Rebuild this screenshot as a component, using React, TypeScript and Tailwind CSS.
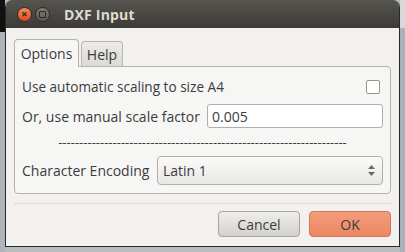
export default function App() {
  return (
    <div
      className="flex w-[405px] h-[252px] bg-[#b9bcbf] overflow-hidden"
      style={{ fontFamily: '"Open Sans", "Noto Sans", sans-serif' }}
    >
      {/* strip of the desktop behind */}
      <div className="flex flex-col w-[5px] shrink-0">
        <div className="h-[32px] bg-[#111]" />
        <div className="flex-1 bg-[#aeb4ba]" />
      </div>

      {/* dialog window */}
      <div className="flex flex-col w-[395px] h-[247px] shrink-0 rounded-t-[7px] border-x border-b border-[#2a2a28] bg-[#f2f1f0] overflow-hidden">
        {/* title bar */}
        <div className="flex items-center h-[28px] shrink-0 bg-gradient-to-b from-[#55544f] to-[#3c3b37] pl-[11px]">
          <div className="flex items-center justify-center w-[15px] h-[15px] rounded-full bg-gradient-to-b from-[#f78a5c] to-[#dd4814] border border-[#2c2b28]">
            <span className="text-[#2b2a27] text-[11px] leading-none font-bold -mt-px">×</span>
          </div>
          <div className="flex items-center justify-center w-[15px] h-[15px] ml-[3px] rounded-full bg-gradient-to-b from-[#7b7a74] to-[#5a5954] border border-[#2c2b28]">
            <div className="w-[7px] h-[7px] border border-[#2b2a27] rounded-[1px]" />
          </div>
          <span className="ml-[14px] text-[14px] font-bold text-[#dfdbd2] tracking-[0.2px]">DXF Input</span>
        </div>

        {/* body */}
        <div className="flex flex-col flex-1 px-[8px] pt-[11px] text-[14px] text-[#3c3c3c]">
          {/* tabs */}
          <div className="flex items-end h-[28px] -mb-px relative z-10">
            <div className="flex items-center justify-center w-[65px] h-[28px] rounded-t-[4px] border border-b-0 border-[#b7b2ab] bg-[#f6f6f5]">
              Options
            </div>
            <div className="flex items-center justify-center w-[42px] h-[25px] ml-[2px] mb-px rounded-t-[4px] border border-b-0 border-[#bcb7b0] bg-gradient-to-b from-[#ecebe9] to-[#dbd9d5]">
              Help
            </div>
          </div>

          {/* panel */}
          <div className="flex flex-col h-[128px] rounded-b-[4px] rounded-tr-[4px] border border-[#b7b2ab] bg-[#f6f6f5] pl-[7px] pr-[7px] pt-[8px]">
            <div className="flex items-center justify-between h-[24px]">
              <span className="text-[13.6px]">Use automatic scaling to size A4</span>
              <div className="w-[14px] h-[14px] mr-[3px] rounded-[2px] border border-[#9a948b] bg-white" />
            </div>
            <div className="flex items-center h-[24px] mt-[5px]">
              <span className="w-[185px] shrink-0 whitespace-nowrap">Or, use manual scale factor</span>
              <div className="flex items-center flex-1 h-[24px] pl-[4px] rounded-[3px] border border-[#b3aea7] bg-white">
                0.005
              </div>
            </div>
            <div className="flex items-center justify-center h-[28px]">
              <div className="whitespace-nowrap text-[13px] leading-none">
                {"-".repeat(69)}
              </div>
            </div>
            <div className="flex items-center h-[29px]">
              <span className="w-[135px] shrink-0 whitespace-nowrap">Character Encoding</span>
              <div className="flex items-center justify-between flex-1 h-[29px] pl-[5px] pr-[7px] rounded-[4px] border border-[#b3aea7] bg-gradient-to-b from-[#fbfbfa] to-[#e8e7e5]">
                <span>Latin 1</span>
                <svg width="7" height="11" viewBox="0 0 7 11" fill="#6b6965">
                  <path d="M3.5 0 L7 4 H0 Z" />
                  <path d="M0 7 H7 L3.5 11 Z" />
                </svg>
              </div>
            </div>
          </div>

          {/* separator */}
          <div className="mt-[9px] border-t border-[#dcdad6]" />

          {/* buttons */}
          <div className="flex justify-end gap-[9px] mt-[7px]">
            <div className="flex items-center justify-center w-[82px] h-[26px] rounded-[4px] border border-[#a7a39d] bg-gradient-to-b from-[#efeeec] to-[#d3d1cd]">
              Cancel
            </div>
            <div className="flex items-center justify-center w-[82px] h-[26px] rounded-[4px] border border-[#cd7a5c] bg-gradient-to-b from-[#f59c7b] to-[#ec8762]">
              OK
            </div>
          </div>
        </div>
      </div>

      <div className="flex flex-col w-[5px] shrink-0">
        <div className="h-[28px] bg-[#d6d8da]" />
        <div className="flex-1 bg-[#a9b1ba]" />
      </div>
    </div>
  );
}
